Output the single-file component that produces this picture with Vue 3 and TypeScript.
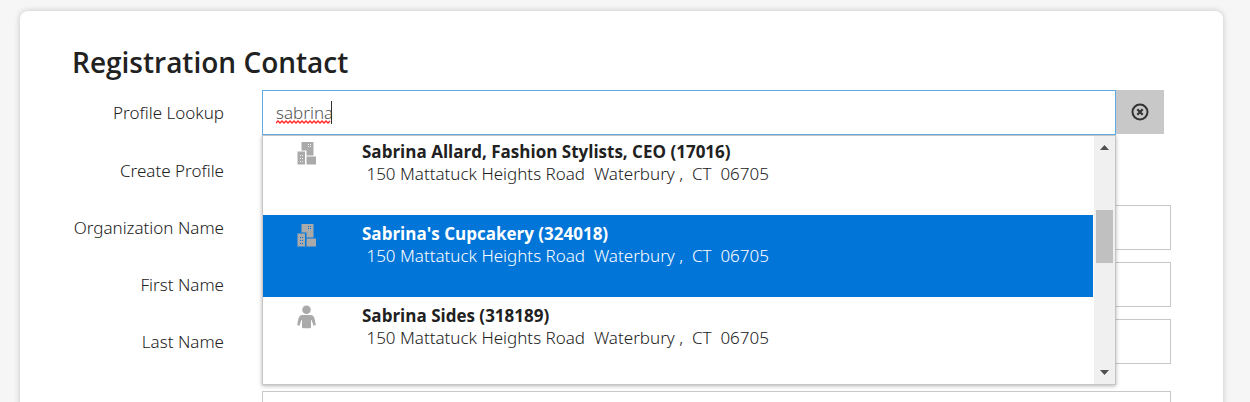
<script setup lang="ts">
import { ref } from 'vue'

type Kind = 'organization' | 'person'

interface Profile {
  id: number
  name: string
  kind: Kind
  address: string
}

const query = ref('sabrina')
const activeId = ref(324018)
const address = ' 150 Mattatuck Heights Road  Waterbury ,  CT  06705'

const profiles: Profile[] = [
  { id: 17016, name: 'Sabrina Allard, Fashion Stylists, CEO', kind: 'organization', address },
  { id: 324018, name: "Sabrina's Cupcakery", kind: 'organization', address },
  { id: 318189, name: 'Sabrina Sides', kind: 'person', address },
]

const fields = [
  { id: 'organization', label: 'Organization Name' },
  { id: 'first-name', label: 'First Name' },
  { id: 'last-name', label: 'Last Name' },
]
</script>

<template>
  <main class="card">
    <h1 class="title">Registration Contact</h1>
    <form class="form" @submit.prevent>
      <div class="row lookup-row">
        <label class="label" for="lookup">Profile Lookup</label>
        <div class="lookup">
          <div class="combo">
            <input
              id="lookup"
              v-model="query"
              class="input lookup-input"
              type="text"
              role="combobox"
              aria-expanded="true"
              aria-controls="profiles"
              autocomplete="off"
              spellcheck="false"
            />
            <svg v-if="query === 'sabrina'" class="typing" width="57" height="25" viewBox="0 0 57 25" aria-hidden="true">
              <path
                d="M0 22l2-2 2 2 2-2 2 2 2-2 2 2 2-2 2 2 2-2 2 2 2-2 2 2 2-2 2 2 2-2 2 2 2-2 2 2 2-2 2 2 2-2 2 2 2-2 2 2 2-2 2 2 2-2"
                fill="none"
                stroke="#f22"
                stroke-width="1.3"
              />
              <path d="M55.5 0v23" stroke="#333" />
            </svg>
            <div class="dropdown">
              <ul id="profiles" class="options" role="listbox" aria-label="Profiles">
                <li
                  v-for="p in profiles"
                  :key="p.id"
                  class="option"
                  :class="{ active: p.id === activeId }"
                  role="option"
                  :aria-selected="p.id === activeId"
                  @mouseenter="activeId = p.id"
                >
                  <svg v-if="p.kind === 'organization'" class="icon" width="20" height="24" viewBox="0 0 20 24" aria-hidden="true">
                    <path d="M4.500 1h12v13.500H9.500V9.500H4.500z" fill="#aaa" />
                    <path d="M.5 10.500h7.500v13H.5zM9.500 15.500h9.500v8H9.500z" fill="#aaa" />
                    <path
                      class="windows"
                      d="M11 3h1v1h-1zM13 3h1v1h-1zM11 5h1v1h-1zM13 5h1v1h-1zM3 14h1v1H3zM5 14h1v1H5zM3 17h1v1H3zM5 17h1v1H5zM3 20h1v1H3zM5 20h1v1H5z"
                    />
                  </svg>
                  <svg v-else class="icon" width="20" height="24" viewBox="0 0 20 24" aria-hidden="true">
                    <circle cx="9.500" cy="4.800" r="4.300" fill="#aaa" />
                    <path
                      d="M5.500 10h8c2.500 0 3.700 2 4.300 4.500l1 5.500-2.300.8-1.900-5.800-.6.200V22c0 .9-.6 1.300-1.500 1.300h-6c-.9 0-1.500-.4-1.500-1.300v-6.800l-.6-.2-1.900 5.800-2.300-.8 1-5.500C1.800 12 3 10 5.500 10z"
                      fill="#aaa"
                    />
                  </svg>
                  <div class="details">
                    <strong class="name">{{ p.name }} ({{ p.id }})</strong>
                    <span class="address">{{ p.address }}</span>
                  </div>
                </li>
              </ul>
              <div class="scrollbar" aria-hidden="true">
                <svg width="9" height="5" viewBox="0 0 9 5"><path d="M4.500 0L9 5H0z" fill="#505050" /></svg>
                <div class="track"><div class="thumb"></div></div>
                <svg width="9" height="5" viewBox="0 0 9 5"><path d="M0 0h9L4.500 5z" fill="#505050" /></svg>
              </div>
            </div>
          </div>
          <button class="clear" type="button" aria-label="Clear profile" @click="query = ''">
            <svg width="18" height="18" viewBox="0 0 18 18" fill="none" stroke="#333" aria-hidden="true">
              <circle cx="9" cy="9" r="7.500" stroke-width="2" />
              <path d="M6.300 6.300l5.400 5.400M11.700 6.300l-5.400 5.400" stroke-width="2.200" />
            </svg>
          </button>
        </div>
      </div>
      <div class="row">
        <span class="label">Create Profile</span>
      </div>
      <div v-for="f in fields" :key="f.id" class="row">
        <label class="label" :for="f.id">{{ f.label }}</label>
        <input :id="f.id" class="input" type="text" />
      </div>
      <div class="row section">
        <span class="label"></span>
        <input class="input" type="text" aria-label="Address" />
      </div>
    </form>
  </main>
</template>

<style>
body {
  overflow: hidden;
  background: #f6f6f6;
}
</style>

<style scoped>
.card {
  margin: 11px 27px 0 20px;
  padding: 31px 52px;
  border-radius: 8px;
  background: #fff;
  box-shadow: 0 0 6px rgba(0, 0, 0, 0.2);
  color: #212121;
  font: 300 17px/22px 'Noto Sans', 'Open Sans', sans-serif;
}
.title {
  margin: 0 0 8px;
  font-family: 'Open Sans', 'Noto Sans', sans-serif;
  font-size: 28px;
  font-weight: 600;
  line-height: 40px;
}
.form {
  display: flex;
  flex-direction: column;
  gap: 12px;
}
.row {
  display: flex;
  align-items: center;
  gap: 38px;
  min-height: 45px;
}
.lookup-row {
  min-height: 46px;
}
.section {
  margin-top: 15px;
}
.label {
  flex: 0 0 152px;
  text-align: right;
  white-space: nowrap;
}
.input {
  box-sizing: border-box;
  flex: 1;
  min-width: 0;
  width: 100%;
  height: 45px;
  padding: 0 13px;
  border: 1px solid #c8c8c8;
  background: #fff;
  color: #555;
  font: inherit;
  outline: none;
}
.lookup {
  display: flex;
  flex: 1;
  align-self: flex-start;
  margin-right: 7px;
}
.combo {
  position: relative;
  display: flex;
  flex: 1;
}
.lookup-input {
  position: relative;
  z-index: 2;
  border-color: #5eabe6;
}
.typing {
  position: absolute;
  z-index: 3;
  top: 11px;
  left: 14px;
}
.clear {
  display: flex;
  align-items: center;
  justify-content: center;
  width: 48px;
  height: 44px;
  padding: 0;
  border: 0;
  background: #c8c8c8;
}
.dropdown {
  position: absolute;
  top: 100%;
  left: 0;
  right: 0;
  z-index: 1;
  box-sizing: border-box;
  display: flex;
  gap: 1px;
  height: 250px;
  overflow: hidden;
  border: 1px solid #c5c5c5;
  background: #fff;
  box-shadow: 0 1px 4px rgba(0, 0, 0, 0.3);
}
.options {
  flex: 1;
  margin: -3px 0 0;
  padding: 0;
  list-style: none;
}
.option {
  box-sizing: border-box;
  display: flex;
  align-items: flex-start;
  gap: 45px;
  height: 82px;
  padding: 8px 34px;
}
.option.active {
  background: #0275d8;
  color: #fff;
}
.icon {
  flex: none;
}
.windows {
  fill: #eee;
}
.active .windows {
  fill: #0275d8;
}
.details {
  display: flex;
  flex-direction: column;
  white-space: pre;
}
.name {
  font-family: 'Open Sans', 'Noto Sans', sans-serif;
  font-weight: 700;
}
.scrollbar {
  box-sizing: border-box;
  display: flex;
  flex-direction: column;
  align-items: center;
  width: 21px;
  padding: 9px 2px;
  background: #f0f0f0;
}
.track {
  display: flex;
  flex-direction: column;
  flex: 1;
  align-self: stretch;
  padding-top: 60px;
}
.thumb {
  height: 53px;
  background: #c0c0c0;
}
</style>
